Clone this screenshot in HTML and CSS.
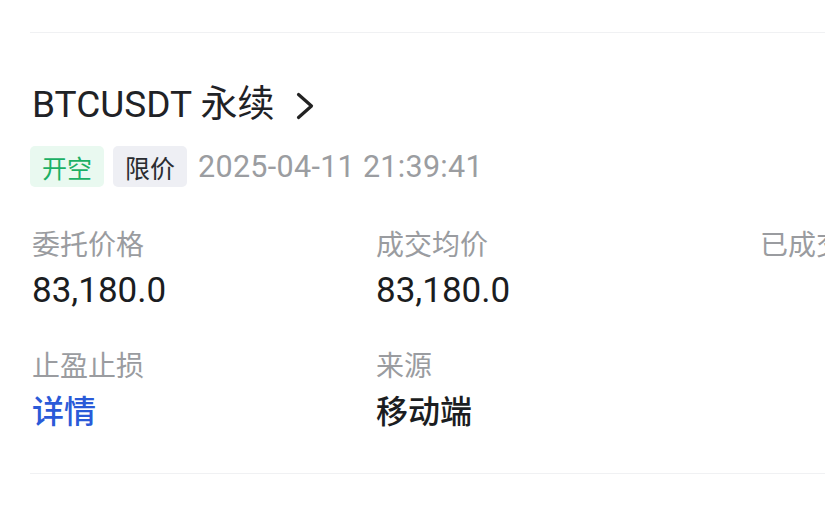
FILE: index.html
```html
<!DOCTYPE html>
<html lang="zh-CN">
<head>
    <meta charset="UTF-8">
    <meta name="viewport" content="width=device-width, initial-scale=1.0">
    <title>订单详情</title>
    <link rel="stylesheet" href="styles.css">
</head>
<body>
    <div class="page">
        <div class="divider top"></div>

        <div class="title">
            <span>BTCUSDT 永续</span>
            <svg class="chevron" width="20" height="28" viewBox="0 0 20 28">
                <path d="M3.5 2.5 L16.5 14 L3.5 25.5" fill="none" stroke="#222" stroke-width="3.2" stroke-linecap="round" stroke-linejoin="round"/>
            </svg>
        </div>

        <div class="tags">
            <span class="tag tag-open">开空</span>
            <span class="tag tag-type">限价</span>
            <span class="time">2025-04-11 21:39:41</span>
        </div>

        <div class="info">
            <div class="item">
                <div class="label">委托价格</div>
                <div class="value">83,180.0</div>
            </div>
            <div class="item">
                <div class="label">成交均价</div>
                <div class="value">83,180.0</div>
            </div>
            <div class="item">
                <div class="label">已成交数量</div>
                <div class="value"></div>
            </div>
            <div class="item">
                <div class="label">止盈止损</div>
                <div class="value link">详情</div>
            </div>
            <div class="item">
                <div class="label">来源</div>
                <div class="value cn">移动端</div>
            </div>
        </div>

        <div class="divider bottom"></div>
    </div>
</body>
</html>
```

FILE: styles.css
```css
html, body {
    margin: 0;
    padding: 0;
    background-color: #ffffff;
}
body {
    font-family: Roboto, "Noto Sans CJK SC", sans-serif;
    color: #1f2226;
    width: 825px;
    height: 519px;
    overflow: hidden;
}
.page {
    padding-top: 32px;
    padding-left: 32px;
    width: 1100px;
}
.divider {
    height: 1px;
    background-color: #f0f1f3;
    margin-left: -2px;
}
.title {
    display: flex;
    align-items: center;
    margin-top: 48px;
    height: 48px;
    font-size: 37px;
    line-height: 48px;
    color: #1f2226;
}
.chevron {
    margin-left: 20px;
    margin-top: 2px;
}
.tags {
    display: flex;
    align-items: center;
    margin-top: 17px;
    margin-left: -2px;
    height: 41px;
}
.tag {
    display: flex;
    align-items: center;
    height: 41px;
    padding: 0 12px;
    border-radius: 5px;
    font-size: 25px;
}
.tag-open {
    background-color: #e9f9f0;
    color: #1bb065;
}
.tag-type {
    background-color: #eeeff4;
    color: #2a2c30;
    margin-left: 9px;
}
.time {
    margin-left: 11px;
    font-size: 30.5px;
    color: #9b9da1;
    letter-spacing: 0.3px;
}
.info {
    display: grid;
    grid-template-columns: 344px 384px 300px;
    row-gap: 36px;
    margin-top: 41px;
    margin-bottom: 39px;
}
.label {
    font-size: 28px;
    line-height: 36px;
    color: #9a9ca0;
    white-space: nowrap;
}
.value {
    margin-top: 5px;
    font-size: 35px;
    line-height: 44px;
    height: 44px;
    color: #1b1d21;
    white-space: nowrap;
}
.value.link,
.value.cn {
    font-size: 32px;
    font-weight: 500;
}
.value.link {
    color: #2a5ad8;
}
```
